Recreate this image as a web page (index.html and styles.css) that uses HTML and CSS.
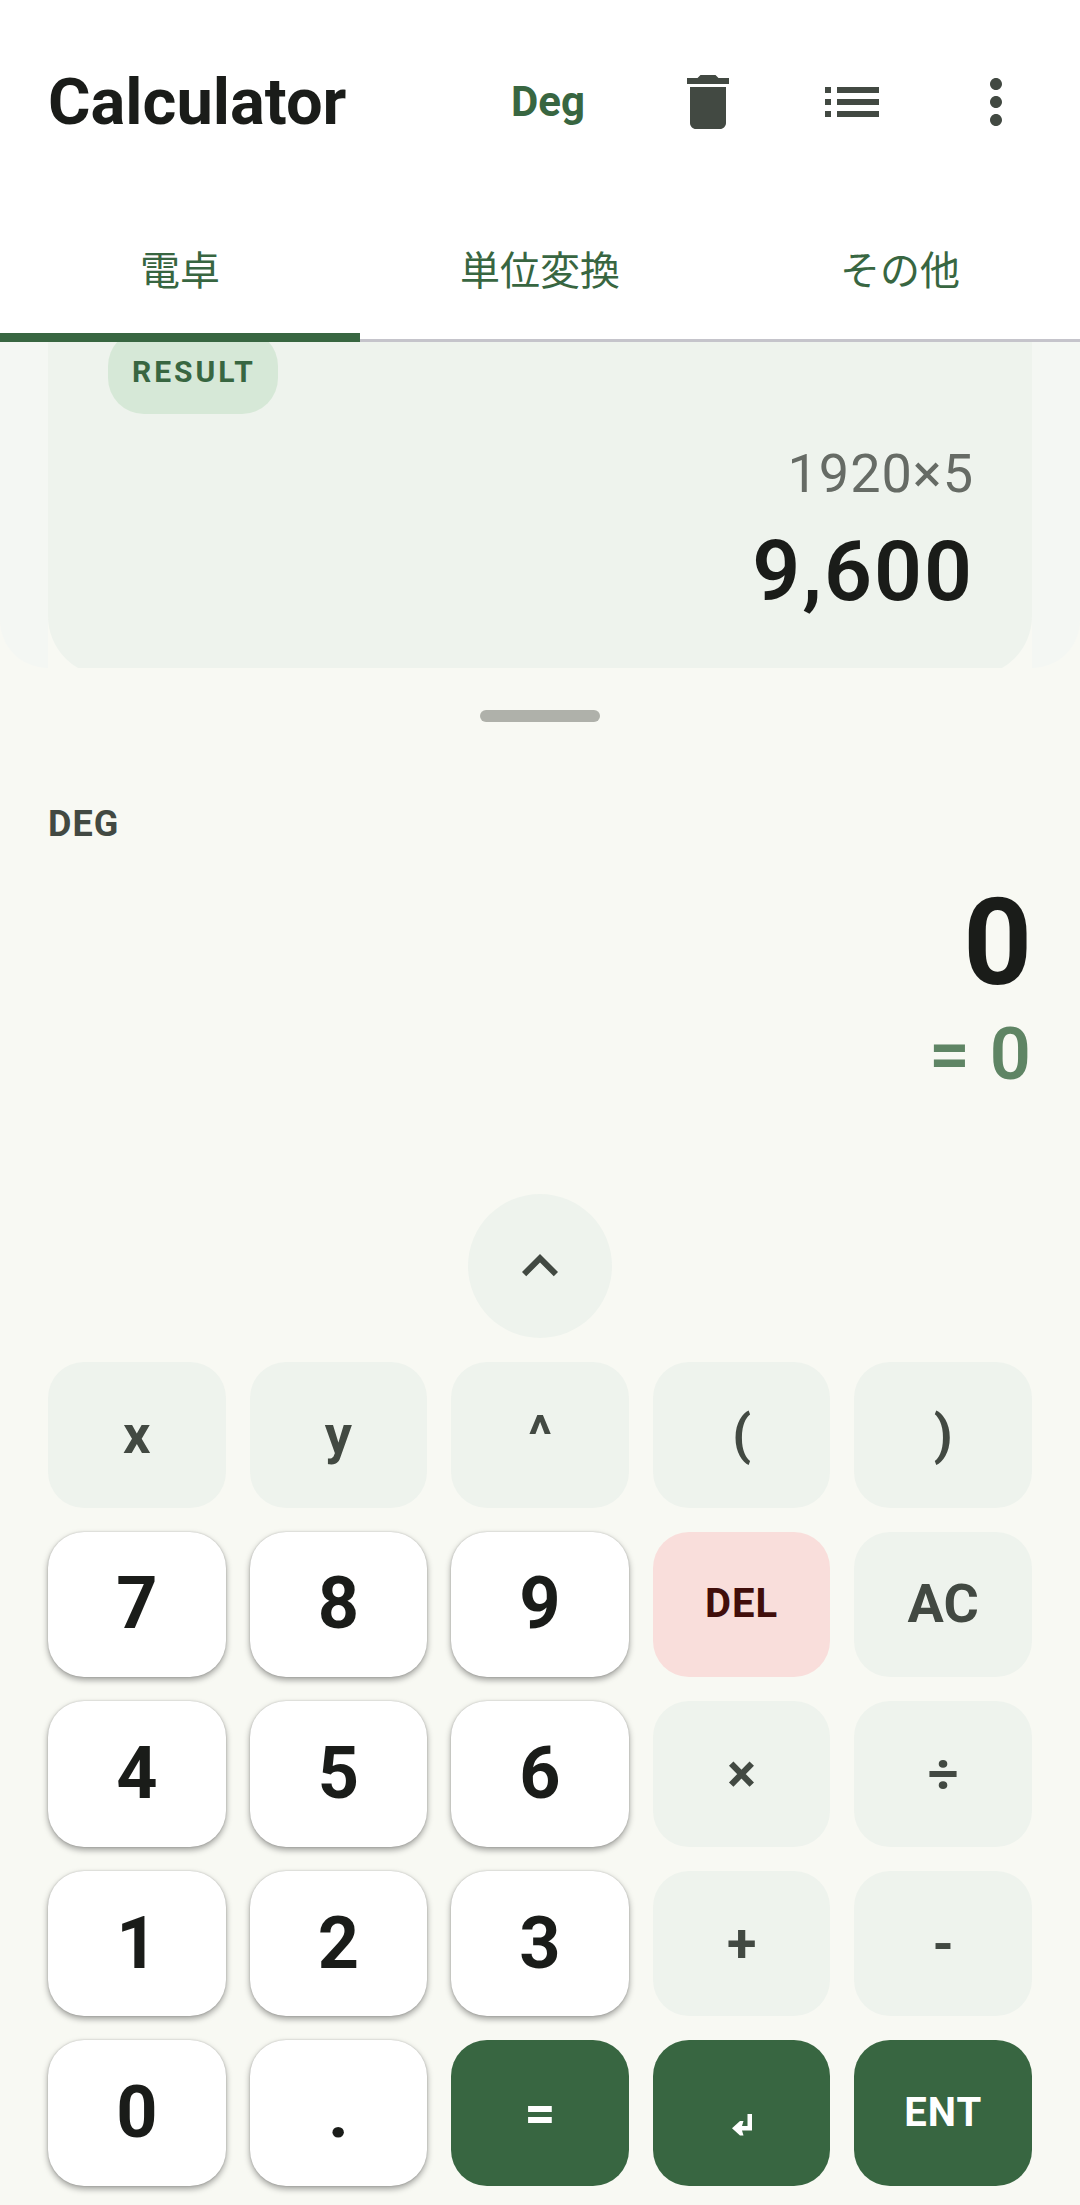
FILE: index.html
```html
<!DOCTYPE html>
<html lang="ja">
<head>
<meta charset="utf-8">
<meta name="viewport" content="width=device-width, initial-scale=1">
<title>Calculator</title>
<link rel="stylesheet" href="styles.css">
</head>
<body>
<div class="app">
  <header class="topbar">
    <h1 class="title">Calculator</h1>
    <button class="angle" type="button">Deg</button>
    <button class="icon-button" type="button" aria-label="Clear history">
      <svg class="icon" viewBox="0 0 24 24"><path d="M6 19c0 1.1.9 2 2 2h8c1.1 0 2-.9 2-2V7H6v12zM19 4h-3.500l-1-1h-5l-1 1H5v2h14V4z"/></svg>
    </button>
    <button class="icon-button" type="button" aria-label="History list">
      <svg class="icon" viewBox="0 0 24 24"><path d="M3 13h2v-2H3v2zm0 4h2v-2H3v2zm0-8h2V7H3v2zm4 4h14v-2H7v2zm0 4h14v-2H7v2zM7 7v2h14V7H7z"/></svg>
    </button>
    <button class="icon-button" type="button" aria-label="More options">
      <svg class="icon" viewBox="0 0 24 24"><path d="M12 8c1.100 0 2-.9 2-2s-.9-2-2-2-2 .9-2 2 .9 2 2 2zm0 2c-1.100 0-2 .9-2 2s.9 2 2 2 2-.9 2-2-.9-2-2-2zm0 6c-1.100 0-2 .9-2 2s.9 2 2 2 2-.9 2-2-.9-2-2-2z"/></svg>
    </button>
  </header>

  <nav class="tabs">
    <a class="tab tab-active" href="#calculator">電卓</a>
    <a class="tab" href="#units">単位変換</a>
    <a class="tab" href="#others">その他</a>
  </nav>

  <section class="history">
    <div class="swipe swipe-start"></div>
    <article class="card">
      <span class="chip">RESULT</span>
      <p class="card-expression">1920×5</p>
      <p class="card-value">9,600</p>
    </article>
    <div class="swipe swipe-end"></div>
  </section>

  <div class="handle"></div>

  <section class="display">
    <p class="mode">DEG</p>
    <p class="entry">0</p>
    <p class="preview">= 0</p>
  </section>

  <button class="expand" type="button" aria-label="Show more keys">
    <svg class="icon" viewBox="0 0 24 24"><path d="M12 8l-6 6 1.410 1.410L12 10.830l4.590 4.580L18 14z"/></svg>
  </button>

  <main class="keypad">
    <button class="key" type="button">x</button>
    <button class="key" type="button">y</button>
    <button class="key" type="button">^</button>
    <button class="key" type="button">(</button>
    <button class="key" type="button">)</button>

    <button class="key key-digit" type="button">7</button>
    <button class="key key-digit" type="button">8</button>
    <button class="key key-digit" type="button">9</button>
    <button class="key key-delete key-word" type="button">DEL</button>
    <button class="key" type="button">AC</button>

    <button class="key key-digit" type="button">4</button>
    <button class="key key-digit" type="button">5</button>
    <button class="key key-digit" type="button">6</button>
    <button class="key" type="button">×</button>
    <button class="key" type="button">÷</button>

    <button class="key key-digit" type="button">1</button>
    <button class="key key-digit" type="button">2</button>
    <button class="key key-digit" type="button">3</button>
    <button class="key" type="button">+</button>
    <button class="key" type="button">-</button>

    <button class="key key-digit" type="button">0</button>
    <button class="key key-digit" type="button">.</button>
    <button class="key key-primary" type="button">=</button>
    <button class="key key-primary" type="button" aria-label="New line">
      <svg class="return" viewBox="0 0 20 22"><path d="M15.500 0H20v16.500H10l1.500 5H8L0 14.300 8 7h3.500L10 12h5.500z"/></svg>
    </button>
    <button class="key key-primary key-word" type="button">ENT</button>
  </main>
</div>
</body>
</html>
```
FILE: styles.css
```css
* {
  box-sizing: border-box;
}

body {
  margin: 0;
  background: #f8f9f3;
  color: #1a1c19;
  font-family: Roboto, "Noto Sans CJK JP", sans-serif;
}

h1,
p {
  margin: 0;
}

button {
  padding: 0;
  border: 0;
  background: none;
  color: inherit;
  font: inherit;
  cursor: pointer;
}

.app {
  display: flex;
  flex-direction: column;
  min-height: 100vh;
}

.icon {
  display: block;
  width: 72px;
  height: 72px;
  fill: #424942;
}

/* Top bar */

.topbar {
  display: flex;
  align-items: center;
  height: 204px;
  padding: 0 12px 0 48px;
  background: #fff;
}

.title {
  flex: 1;
  font-size: 65px;
  line-height: 84px;
  font-weight: 700;
}

.angle {
  padding: 0 51px;
  color: #386641;
  font-size: 42px;
  line-height: 60px;
  font-weight: 700;
}

.icon-button {
  display: grid;
  place-items: center;
  width: 144px;
  height: 144px;
}

/* Tabs */

.tabs {
  display: grid;
  grid-template-columns: repeat(3, 1fr);
  background: #fff;
  box-shadow: inset 0 -3px #c5c4cb;
}

.tab {
  padding: 39px 0 33px;
  border-bottom: 9px solid transparent;
  color: #386641;
  font-size: 40px;
  line-height: 57px;
  text-align: center;
  text-decoration: none;
}

.tab-active {
  border-color: #386641;
}

/* History */

.history {
  display: grid;
  grid-template-columns: 48px 1fr 48px;
  height: 326px;
  overflow: hidden;
}

.swipe {
  background: #f4f7f3;
}

.swipe-start {
  border-bottom-left-radius: 48px;
}

.swipe-end {
  border-bottom-right-radius: 48px;
}

.card {
  display: flex;
  flex-direction: column;
  align-items: flex-end;
  margin: -60px 0 -8px;
  padding: 48px 58px 48px 60px;
  border-radius: 60px;
  background: #eef3ed;
}

.chip {
  align-self: flex-start;
  padding: 0 22px 0 24px;
  border-radius: 36px;
  background: #d6e8d7;
  color: #386641;
  font-size: 30px;
  line-height: 84px;
  font-weight: 700;
  letter-spacing: 3px;
}

.card-expression {
  margin-top: 24px;
  color: #666b65;
  font-size: 54px;
  line-height: 72px;
  letter-spacing: 1px;
}

.card-value {
  margin-top: 12px;
  font-size: 84px;
  line-height: 100px;
  font-weight: 600;
  letter-spacing: 2px;
}

.handle {
  width: 120px;
  height: 12px;
  margin: 42px auto 0;
  border-radius: 6px;
  background: #afb1aa;
}

/* Current entry */

.display {
  padding: 78px 48px 0;
  text-align: right;
}

.mode {
  color: #424942;
  font-size: 36px;
  line-height: 48px;
  font-weight: 700;
  letter-spacing: 1px;
  text-align: left;
}

.entry {
  margin-top: 25px;
  font-size: 120px;
  line-height: 140px;
  font-weight: 700;
}

.preview {
  color: #5f8564;
  font-size: 72px;
  line-height: 84px;
  font-weight: 600;
  letter-spacing: 1px;
}

/* Keys */

.expand {
  display: grid;
  place-items: center;
  width: 144px;
  height: 144px;
  margin: 97px auto 24px;
  border-radius: 50%;
  background: #eef3ed;
}

.keypad {
  flex: 1;
  display: grid;
  grid-template-columns: repeat(5, 1fr);
  grid-auto-rows: 1fr;
  gap: 24px;
  padding: 0 48px 19px;
}

.key {
  display: grid;
  place-items: center;
  border-radius: 36px;
  background: #eef3ed;
  color: #424942;
  font-size: 54px;
  line-height: 72px;
  font-weight: 700;
}

.key-digit {
  background: #fff;
  color: #1a1c19;
  font-size: 72px;
  box-shadow: 0 3px 6px rgba(0, 0, 0, 0.36), 0 0 2px rgba(0, 0, 0, 0.2);
}

.key-word {
  font-size: 40px;
  letter-spacing: 1px;
}

.key-delete {
  background: #f9dedb;
  color: #410e0b;
}

.key-primary {
  background: #386641;
  color: #fff;
}

.return {
  width: 20px;
  height: 22px;
  margin-top: 24px;
  fill: #fff;
}
```
